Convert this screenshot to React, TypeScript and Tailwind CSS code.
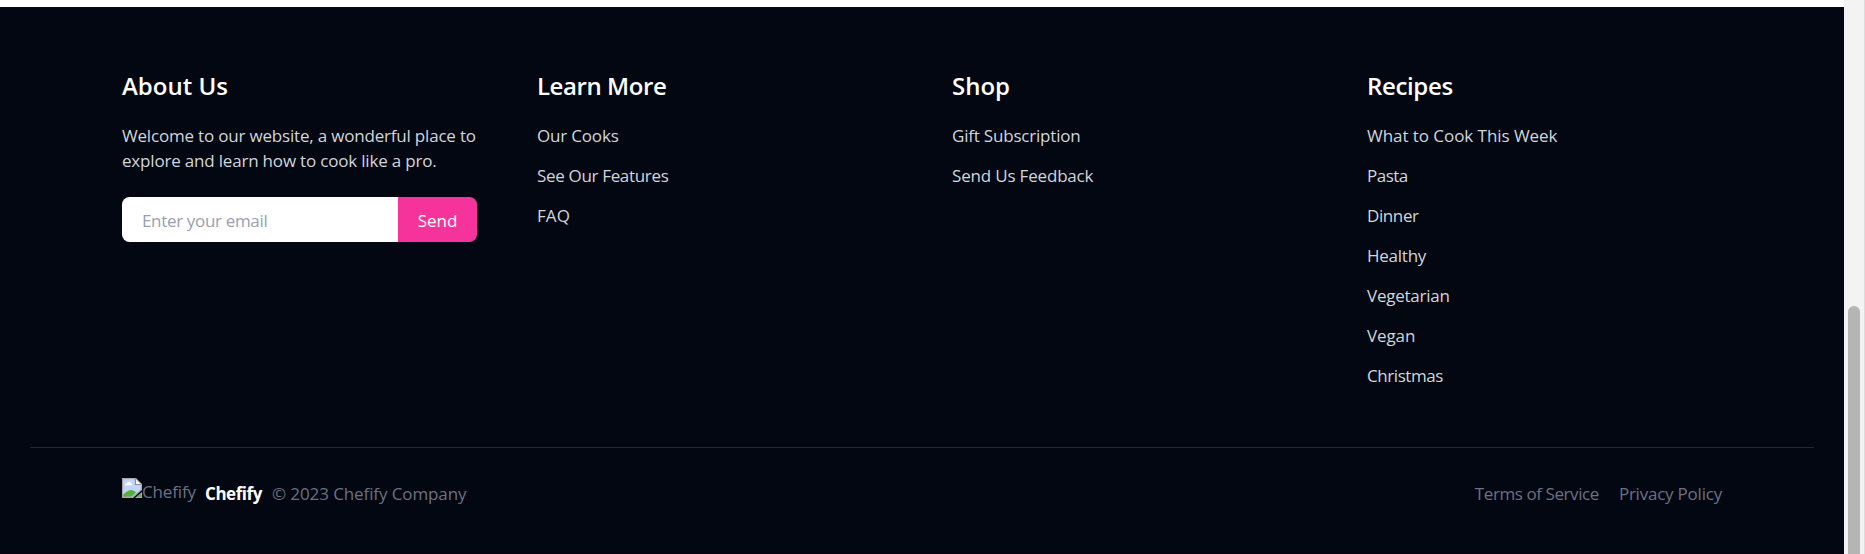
type Item = { label: string; tracking: string };
type Column = { title: string; tracking: string; items: Item[] };

const columns: Column[] = [
  {
    title: 'Learn More',
    tracking: 'tracking-[-0.42px]',
    items: [
      { label: 'Our Cooks', tracking: 'tracking-[-0.18px]' },
      { label: 'See Our Features', tracking: 'tracking-[-0.33px]' },
      { label: 'FAQ', tracking: 'tracking-[0.1px]' },
    ],
  },
  {
    title: 'Shop',
    tracking: 'tracking-[0px]',
    items: [
      { label: 'Gift Subscription', tracking: 'tracking-[-0.2px]' },
      { label: 'Send Us Feedback', tracking: 'tracking-[-0.18px]' },
    ],
  },
  {
    title: 'Recipes',
    tracking: 'tracking-[-0.35px]',
    items: [
      { label: 'What to Cook This Week', tracking: 'tracking-[-0.05px]' },
      { label: 'Pasta', tracking: 'tracking-[-0.5px]' },
      { label: 'Dinner', tracking: 'tracking-[-0.4px]' },
      { label: 'Healthy', tracking: 'tracking-[-0.25px]' },
      { label: 'Vegetarian', tracking: 'tracking-[-0.25px]' },
      { label: 'Vegan', tracking: 'tracking-[-0.1px]' },
      { label: 'Christmas', tracking: 'tracking-[-0.42px]' },
    ],
  },
];

function MissingImageIcon() {
  return (
    <svg width="20" height="20" viewBox="0 0 20 20" className="shrink-0" aria-hidden="true">
      <path d="M0 0H14L20 6V12L11 20H0Z" fill="#a9a9a9" />
      <path d="M1.2 1.2H13V7H18.8V11.5L10 18.8H1.2Z" fill="#c3d5f8" />
      <path d="M3 7.2C2.8 5.6 4.5 5.2 5 5.4C5.6 3.2 8.6 3.4 8.8 5.2C10.4 5.2 10.4 7.2 9.8 7.2Z" fill="#fff" />
      <path d="M1.2 18.8V16.5C4 14.5 6 12 9 12C11.5 12 13 13.5 14 14.6L9.5 18.8Z" fill="#55b03a" />
      <path d="M14 1.5V6H18.5Z" fill="#fff" />
      <path d="M13.4 0.6V6.5H19.4" fill="none" stroke="#8f8f8f" strokeWidth="1.1" />
      <path d="M20 14V20H13Z" fill="#a9a9a9" />
      <path d="M18.8 16V18.8H14.6L17 16.6Z" fill="#55b03a" />
    </svg>
  );
}

export default function App() {
  return (
    <div className="flex h-[554px] w-full overflow-hidden bg-white font-['Open_Sans',sans-serif] text-[17px] leading-[25px]">
      <div className="flex min-w-0 flex-1 flex-col bg-[#0a0010] pb-px">
        <div className="h-[7px] shrink-0 bg-white" />
        <footer className="flex-1 bg-gray-950 px-[30px] pt-[61px]">
          <div className="grid h-[379px] grid-cols-4 content-start gap-[60px] px-[92px]">
            <section>
              <h2 className="text-[24px] leading-[35px] font-semibold text-white">About Us</h2>
              <p className="mt-5 text-gray-300">
                <span className="block whitespace-nowrap tracking-[-0.19px]">
                  Welcome to our website, a wonderful place to
                </span>
                <span className="block whitespace-nowrap tracking-[-0.19px]">
                  explore and learn how to cook like a pro.
                </span>
              </p>
              <form className="mt-6 flex h-[45px]">
                <input
                  type="email"
                  placeholder="Enter your email"
                  className="min-w-0 flex-1 rounded-l-[7.5px] bg-white px-5 pt-[2px] tracking-[-0.33px] text-gray-700 placeholder:text-gray-400"
                />
                <button type="button" className="w-[79px] rounded-r-[7.5px] bg-pink-500 pt-[2px] text-white">
                  Send
                </button>
              </form>
            </section>
            {columns.map((column) => (
              <section key={column.title}>
                <h2 className={`text-[24px] leading-[35px] font-semibold text-white ${column.tracking}`}>
                  {column.title}
                </h2>
                <ul className="mt-5 flex flex-col gap-[15px] text-gray-300">
                  {column.items.map((item) => (
                    <li key={item.label} className={item.tracking}>
                      <a>{item.label}</a>
                    </li>
                  ))}
                </ul>
              </section>
            ))}
          </div>
          <div className="flex justify-between border-t border-gray-800 px-[92px] pt-[30px] text-gray-500">
            <div className="flex">
              <MissingImageIcon />
              <span className="w-[63px] pt-px tracking-[-0.15px]">Chefify</span>
              <span className="w-[67px] pt-[3px] font-bold tracking-[-0.45px] text-white">Chefify</span>
              <span className="pt-[3px] tracking-[-0.1px]">© 2023 Chefify Company</span>
            </div>
            <div className="flex gap-5 pt-[3px]">
              <a className="tracking-[-0.42px]">Terms of Service</a>
              <a className="tracking-[-0.22px]">Privacy Policy</a>
            </div>
          </div>
        </footer>
      </div>
      <div className="w-[21px] shrink-0 border-r border-[#dcdcdc] bg-[#f3f3f3] pt-[306px] pl-1">
        <div className="h-[400px] w-3 rounded-full bg-[#b5b5b5]" />
      </div>
    </div>
  );
}
